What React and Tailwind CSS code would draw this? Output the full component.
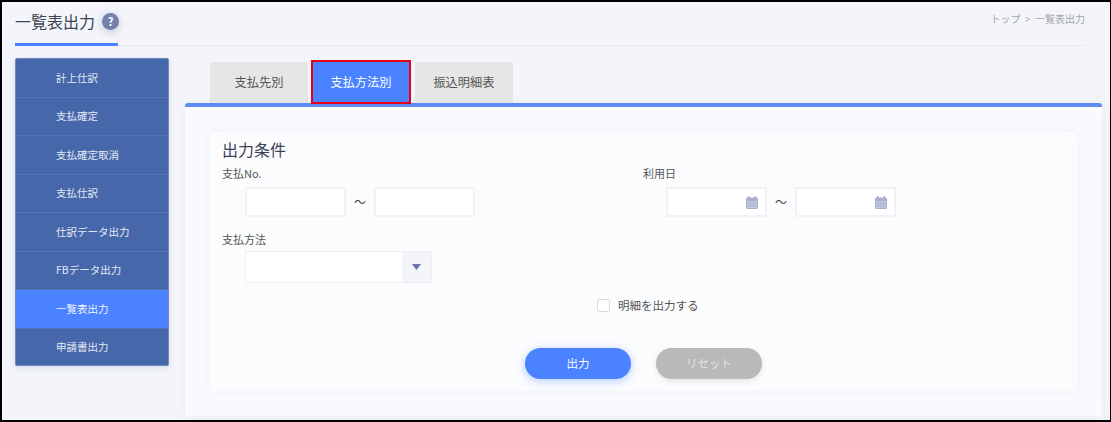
import React from 'react';

const menuItems = ['計上仕訳', '支払確定', '支払確定取消', '支払仕訳', '仕訳データ出力', 'FBデータ出力', '一覧表出力', '申請書出力'];

const CalendarIcon = () => (
  <svg width="12" height="13" viewBox="0 0 12 13" className="shrink-0">
    <rect x="0" y="1.5" width="12" height="11.5" rx="1.5" fill="#a9aed0" />
    <rect x="2" y="0" width="1.5" height="3" fill="#a9aed0" />
    <rect x="8.5" y="0" width="1.5" height="3" fill="#a9aed0" />
    <path d="M1 5h10v7H1z" fill="#c4c8e0" />
    <path d="M1 7.3h10M1 9.6h10M3.5 5v7M6 5v7M8.5 5v7" stroke="#a9aed0" strokeWidth="0.6" />
  </svg>
);

const TextBox = ({ icon }) => (
  <div className="w-[101px] h-[30px] bg-white border-2 border-[#f1f2f5] flex items-center justify-end pr-[7px]">
    {icon && <CalendarIcon />}
  </div>
);

const Range = ({ icon }) => (
  <div className="flex items-center ml-[23px] mt-[6px]">
    <TextBox icon={icon} />
    <span className="w-[28px] text-center text-[12px] text-[#444]">～</span>
    <TextBox icon={icon} />
  </div>
);

export default function App() {
  return (
    <div
      className="w-[1111px] h-[422px] overflow-hidden border-2 border-r border-black bg-[#f4f5fa] text-[#444]"
      style={{ fontFamily: '"Noto Sans CJK JP", "Noto Sans", sans-serif' }}
    >
      {/* Header */}
      <div className="ml-[13px] w-[1070px] h-[44px] border-b border-[#e6e7ec] flex justify-between">
        <div className="w-[103px] h-[44px] border-b-[3px] border-[#4a82ff] flex items-center gap-[7px] pb-[3px]">
          <h1 className="text-[16px] leading-none text-[#3d4354] whitespace-nowrap">一覧表出力</h1>
          <span className="w-[17px] h-[17px] rounded-full bg-[#7480ad] text-white text-[11px] font-bold flex items-center justify-center shrink-0 shadow-[0_2px_8px_rgba(116,128,173,0.4)]">?</span>
        </div>
        <div className="text-[10px] text-[#a3a5ab] pt-[10px] whitespace-nowrap leading-[14px]">トップ &nbsp;&gt;&nbsp; 一覧表出力</div>
      </div>

      <div className="flex pl-[13px]">
        {/* Sidebar */}
        <ul className="w-[154px] mt-[12px] h-[308px] rounded-[2px] overflow-hidden bg-[#4767ab] border border-[#6d87c0] shadow-[0_2px_6px_rgba(70,90,150,0.15)]">
          {menuItems.map((item) => (
            <li
              key={item}
              className={`h-[38.5px] pl-[40px] flex items-center text-[10.5px] whitespace-nowrap border-b border-b-[#5673b3] ${
                item === '一覧表出力' ? 'bg-[#4a82ff] text-[#eef3ff]' : 'text-[#e4e9f5]'
              }`}
            >
              {item}
            </li>
          ))}
        </ul>

        <div className="ml-[16px] w-[917px]">
          {/* Tabs */}
          <div className="flex h-[57px] pl-[25px] pt-[16px]">
            <div className="w-[98px] h-[41px] rounded-t-[4px] bg-[#e6e6e6] flex items-center justify-center text-[12.25px] text-[#555]">支払先別</div>
            <div className="ml-[5px] w-[96px] h-[40px] bg-[#4a82ff] outline-2 outline-[#e60012] flex items-center justify-center text-[12.25px] text-white">支払方法別</div>
            <div className="ml-[6px] w-[98px] h-[41px] rounded-t-[4px] bg-[#e6e6e6] flex items-center justify-center text-[12.25px] text-[#555]">振込明細表</div>
          </div>

          {/* Panel */}
          <div className="h-[313px] border-t-[4px] border-[#5d8cf5] rounded-t-[3px] bg-[#f9fafd] pt-[25px] px-[25px] shadow-[0_0_12px_rgba(90,100,150,0.06)]">
            <div className="h-[259px] bg-[#fbfcfe] rounded-[4px] pl-[12px] pt-[6px] shadow-[0_0_8px_rgba(90,100,150,0.06)]">
              <h2 className="text-[16px] leading-[22px] text-[#3d4354]">出力条件</h2>

              <div className="flex mt-[5px]">
                <div className="w-[421px]">
                  <label className="block text-[11px] leading-[16px] text-[#555]">支払No.</label>
                  <Range />
                </div>
                <div>
                  <label className="block text-[11px] leading-[16px] text-[#555]">利用日</label>
                  <Range icon />
                </div>
              </div>

              <label className="block mt-[14px] text-[11px] leading-[16px] text-[#555]">支払方法</label>
              <div className="ml-[23px] mt-[4px] w-[187px] h-[32px] flex bg-white border border-[#eceef2]">
                <div className="flex-1" />
                <div className="w-[29px] bg-[#f4f5fa] flex items-center justify-center">
                  <svg width="9" height="6" viewBox="0 0 9 6">
                    <path d="M0 0h9L4.5 6z" fill="#6a74a8" />
                  </svg>
                </div>
              </div>

              <div className="flex items-center mt-[14px] ml-[375px]">
                <span className="w-[13px] h-[13px] rounded-[2px] bg-white border border-[#d9dae0]" />
                <span className="ml-[8px] text-[11.5px] leading-[16px] text-[#555]">明細を出力する</span>
              </div>

              <div className="flex mt-[35px] ml-[303px] gap-[25px]">
                <button className="w-[106px] h-[31px] rounded-full bg-[#4a82ff] text-white text-[11.5px] shadow-[0_2px_10px_rgba(74,130,255,0.4)]">出力</button>
                <button className="w-[106px] h-[31px] rounded-full bg-[#b9b9b9] text-[#e4e4e4] text-[11.5px] shadow-[0_2px_6px_rgba(0,0,0,0.1)]">リセット</button>
              </div>
            </div>
          </div>
        </div>
      </div>
    </div>
  );
}
